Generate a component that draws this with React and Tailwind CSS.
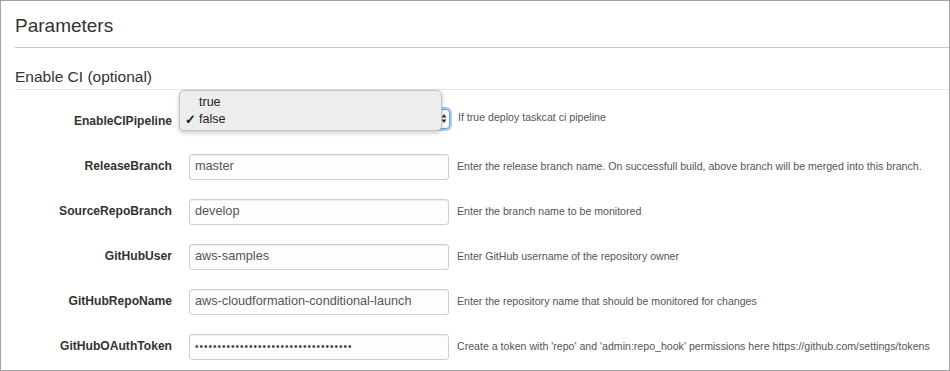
import React from "react";

const font = { fontFamily: '"Liberation Sans", Arial, Helvetica, sans-serif' };

const rows = [
  { label: "ReleaseBranch", value: "master", help: "Enter the release branch name. On successfull build, above branch will be merged into this branch." },
  { label: "SourceRepoBranch", value: "develop", help: "Enter the branch name to be monitored" },
  { label: "GitHubUser", value: "aws-samples", help: "Enter GitHub username of the repository owner" },
  { label: "GitHubRepoName", value: "aws-cloudformation-conditional-launch", help: "Enter the repository name that should be monitored for changes" },
  { label: "GitHubOAuthToken", value: "•".repeat(35), help: "Create a token with 'repo' and 'admin:repo_hook' permissions here https://github.com/settings/tokens", password: true },
];

function Label({ children }) {
  return (
    <div className="w-[157px] shrink-0 text-right text-[12.1px] font-bold text-[#333]">{children}</div>
  );
}

export default function App() {
  return (
    <div style={font} className="relative w-[950px] h-[371px] overflow-hidden border border-[#a3a3a3] bg-white">
      <div className="pl-[14px]">
        <div className="h-[47px] flex items-center pt-[4px] border-b border-[#c9c9c9] text-[19px] text-[#333]">
          Parameters
        </div>
        <div className="h-[42px] flex items-center pt-[16px] border-b border-[#e6e6e6] text-[15.5px] text-[#333]">
          Enable CI (optional)
        </div>
        <div className="pt-[9px]">
          <div className="h-[45px] flex items-center">
            <Label>EnableCIPipeline</Label>
            <div className="ml-[17px] mb-[6px] w-[261px] h-[20px] shrink-0 rounded-[4px] border border-[#6aa0e8] shadow-[0_0_0_2px_rgba(110,160,235,0.55)] bg-white flex items-center justify-end pr-[2px]">
              <svg width="6" height="11" viewBox="0 0 6 11">
                <path d="M3 1 L5.5 4.5 L0.5 4.5 Z" fill="#333" />
                <path d="M3 10 L5.5 6.5 L0.5 6.5 Z" fill="#333" />
              </svg>
            </div>
            <div className="ml-[8px] mb-[8px] text-[10.6px] text-[#555]">If true deploy taskcat ci pipeline</div>
          </div>
          {rows.map((r) => (
            <div key={r.label} className="h-[45px] flex items-center">
              <Label>{r.label}</Label>
              <div className="ml-[17px] w-[260px] h-[26px] shrink-0 rounded-[3px] border border-[#cfcfcf] bg-[#fdfdfd] shadow-[inset_0_1px_1px_rgba(0,0,0,0.06)] flex items-center pl-[5px]">
                {r.password ? (
                  <span className="text-[10px] tracking-[1px] text-[#444] leading-none">{r.value}</span>
                ) : (
                  <span className="text-[12.7px] text-[#555]">{r.value}</span>
                )}
              </div>
              <div className="ml-[8px] text-[10.6px] text-[#555] whitespace-nowrap">{r.help}</div>
            </div>
          ))}
        </div>
      </div>
      <div className="absolute left-[178px] top-[89px] w-[263px] h-[41px] rounded-[5px] border border-[#c4c4c4] bg-[#ededed] shadow-[0_2px_5px_rgba(0,0,0,0.22)] text-[12.5px] text-[#222]">
        <div className="flex items-center h-[17px] mt-[3px] pl-[19px]">true</div>
        <div className="flex items-center h-[17px] pl-[5px]">
          <span className="w-[14px] text-[13px] font-bold">✓</span>
          <span>false</span>
        </div>
      </div>
    </div>
  );
}
